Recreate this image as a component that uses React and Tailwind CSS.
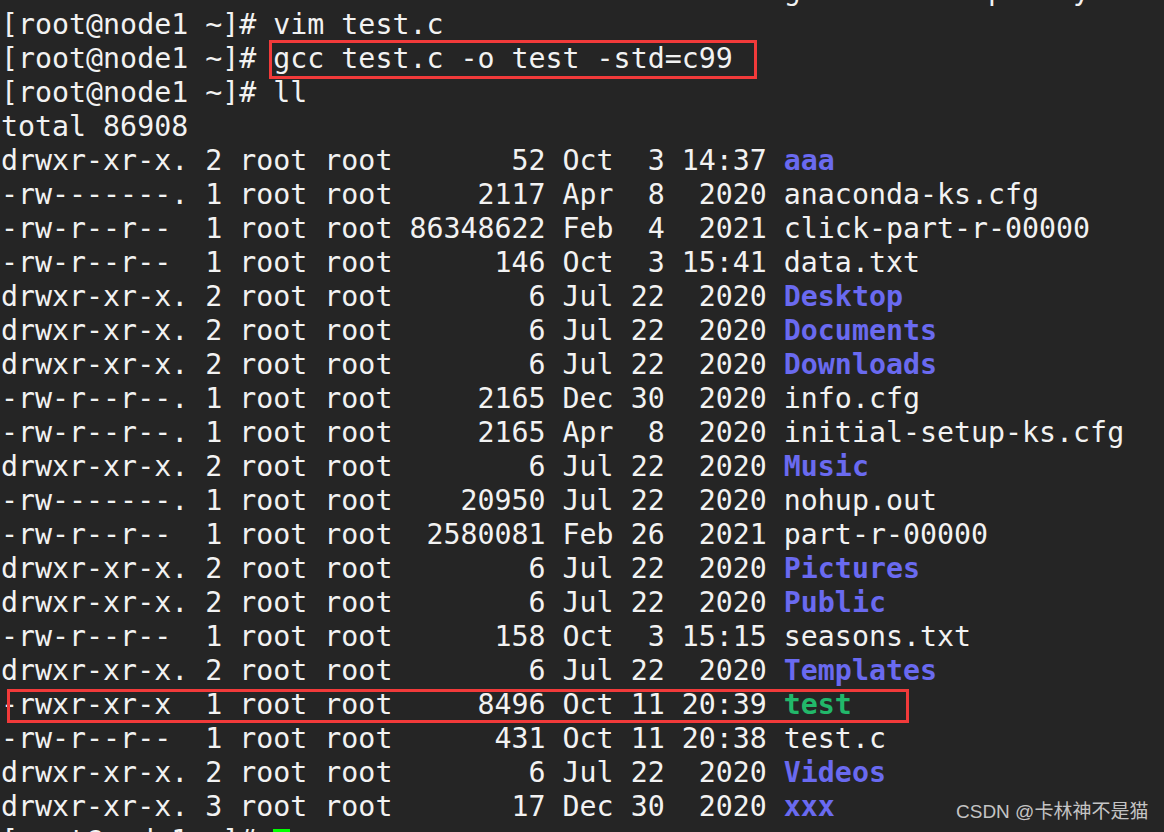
import React from "react";

const W = "text-[#f2f2f2]";
const B = "text-[#6a6af0] font-bold";
const G = "text-[#22b86a] font-bold";

const files = [
  ["drwxr-xr-x. 2 root root       52 Oct  3 14:37 ", "aaa", B],
  ["-rw-------. 1 root root     2117 Apr  8  2020 ", "anaconda-ks.cfg", W],
  ["-rw-r--r--  1 root root 86348622 Feb  4  2021 ", "click-part-r-00000", W],
  ["-rw-r--r--  1 root root      146 Oct  3 15:41 ", "data.txt", W],
  ["drwxr-xr-x. 2 root root        6 Jul 22  2020 ", "Desktop", B],
  ["drwxr-xr-x. 2 root root        6 Jul 22  2020 ", "Documents", B],
  ["drwxr-xr-x. 2 root root        6 Jul 22  2020 ", "Downloads", B],
  ["-rw-r--r--. 1 root root     2165 Dec 30  2020 ", "info.cfg", W],
  ["-rw-r--r--. 1 root root     2165 Apr  8  2020 ", "initial-setup-ks.cfg", W],
  ["drwxr-xr-x. 2 root root        6 Jul 22  2020 ", "Music", B],
  ["-rw-------. 1 root root    20950 Jul 22  2020 ", "nohup.out", W],
  ["-rw-r--r--  1 root root  2580081 Feb 26  2021 ", "part-r-00000", W],
  ["drwxr-xr-x. 2 root root        6 Jul 22  2020 ", "Pictures", B],
  ["drwxr-xr-x. 2 root root        6 Jul 22  2020 ", "Public", B],
  ["-rw-r--r--  1 root root      158 Oct  3 15:15 ", "seasons.txt", W],
  ["drwxr-xr-x. 2 root root        6 Jul 22  2020 ", "Templates", B],
  ["-rwxr-xr-x  1 root root     8496 Oct 11 20:39 ", "test", G],
  ["-rw-r--r--  1 root root      431 Oct 11 20:38 ", "test.c", W],
  ["drwxr-xr-x. 2 root root        6 Jul 22  2020 ", "Videos", B],
  ["drwxr-xr-x. 3 root root       17 Dec 30  2020 ", "xxx", B],
];

function Line({ children }) {
  return <div className="h-[34px] leading-[34px] whitespace-pre">{children}</div>;
}

export default function App() {
  const partial = " ".repeat(46) + "g" + " ".repeat(11) + "p" + " ".repeat(4) + "y";
  return (
    <div className="relative w-[1164px] h-[832px] overflow-hidden bg-[#252525]">
      <div
        className="flex flex-col mt-[-26px] pl-[1px] text-[28.28px] text-[#f2f2f2]"
        style={{ fontFamily: '"DejaVu Sans Mono", monospace' }}
      >
        <Line>{partial}</Line>
        <Line>[root@node1 ~]# vim test.c</Line>
        <Line>[root@node1 ~]# gcc test.c -o test -std=c99</Line>
        <Line>[root@node1 ~]# ll</Line>
        <Line>total 86908</Line>
        {files.map(([meta, name, cls], i) => (
          <Line key={i}>
            {meta}
            <span className={cls}>{name}</span>
          </Line>
        ))}
        <Line>
          {"[root@node1 ~]# "}
          <span className="inline-block w-[17px] h-[26px] align-middle bg-[#00ff00]"></span>
        </Line>
      </div>

      <div className="absolute left-[269px] top-[40px] w-[488px] h-[39px] border-[3px] border-[#f23a3a]"></div>
      <div className="absolute left-[7px] top-[689px] w-[902px] h-[34px] border-[3px] border-[#f23a3a]"></div>

      <div
        className="absolute left-[956px] top-[798px] text-[19px] text-[#c4c4c4] whitespace-nowrap"
        style={{ fontFamily: '"Liberation Sans", "Noto Sans CJK SC", sans-serif' }}
      >
        CSDN @卡林神不是猫
      </div>
    </div>
  );
}
